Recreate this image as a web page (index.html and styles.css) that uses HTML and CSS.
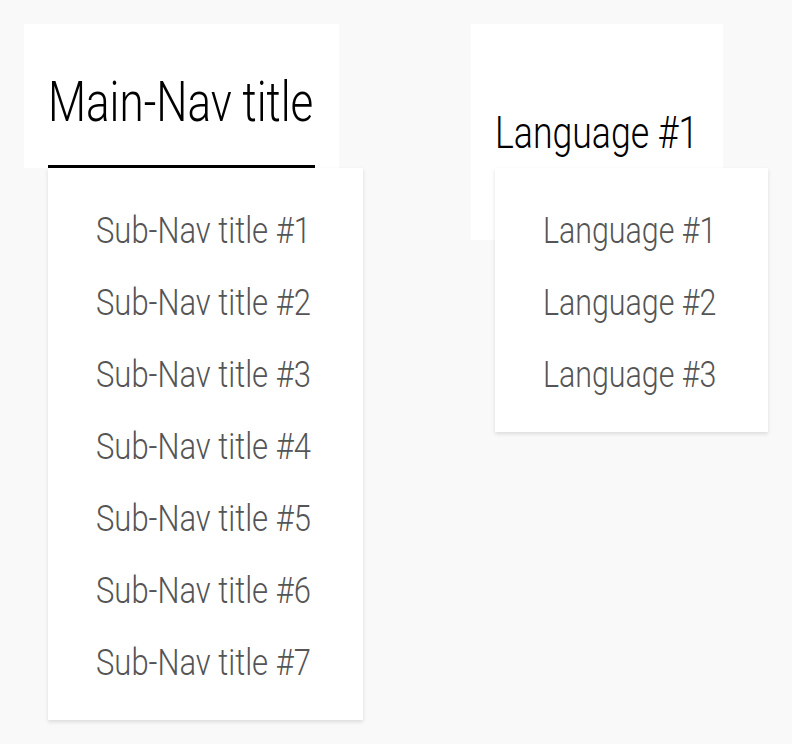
FILE: index.html
```html
<!DOCTYPE html>
<html lang="en">
<head>
<meta charset="utf-8">
<title>Navigation</title>
<link rel="stylesheet" href="styles.css">
</head>
<body>
<div class="page">
  <nav class="nav nav-main">
    <div class="nav-head">
      <div class="nav-title"><span class="tx">Main-Nav title</span></div>
    </div>
    <ul class="dropdown">
      <li><span class="tx">Sub-Nav title #1</span></li>
      <li><span class="tx">Sub-Nav title #2</span></li>
      <li><span class="tx">Sub-Nav title #3</span></li>
      <li><span class="tx">Sub-Nav title #4</span></li>
      <li><span class="tx">Sub-Nav title #5</span></li>
      <li><span class="tx">Sub-Nav title #6</span></li>
      <li><span class="tx">Sub-Nav title #7</span></li>
    </ul>
  </nav>
  <nav class="nav nav-lang">
    <div class="nav-head">
      <div class="nav-title"><span class="tx">Language #1</span></div>
    </div>
    <ul class="dropdown">
      <li><span class="tx">Language #1</span></li>
      <li><span class="tx">Language #2</span></li>
      <li><span class="tx">Language #3</span></li>
    </ul>
  </nav>
</div>
</body>
</html>
```
FILE: styles.css
```css
html, body {
  margin: 0;
  padding: 0;
  background: #f9f9f9;
}
body {
  font-family: Roboto, "Liberation Sans", Arial, sans-serif;
  font-weight: 300;
  color: #000;
}
.page {
  display: flex;
  align-items: flex-start;
  gap: 108px;
  padding: 24px;
}
.nav {
  display: flex;
  flex-direction: column;
}
.nav-head {
  background: #fff;
  padding: 0 24px;
}
.nav-title {
  border-bottom: 3px solid #000;
  white-space: nowrap;
}
.tx {
  display: inline-block;
  transform: scaleX(0.81);
  transform-origin: left center;
}
.nav-main .nav-title .tx {
  transform: scaleX(0.785);
}
.nav-main .dropdown .tx {
  transform: scaleX(0.826);
}
.nav-main .nav-head {
  width: 267px;
}
.nav-main .nav-title {
  font-size: 56px;
  line-height: 64px;
  padding-top: 46px;
  padding-bottom: 31px;
}
.nav-lang .nav-head {
  width: 204px;
  padding-bottom: 69px;
}
.nav-lang .nav-title {
  font-size: 44px;
  line-height: 52px;
  padding-top: 83px;
  padding-bottom: 9px;
}
.dropdown {
  margin: 0 0 0 24px;
  list-style: none;
  background: #fff;
  box-shadow: 0 2px 4px rgba(0, 0, 0, 0.12);
  padding: 26px 0 22px 48px;
  box-sizing: border-box;
}
.nav-main .dropdown {
  width: 315px;
}
.nav-lang .dropdown {
  width: 273px;
  margin-top: -72px;
}
.dropdown li {
  font-size: 37.5px;
  line-height: 72px;
  color: #555;
  white-space: nowrap;
}
```
